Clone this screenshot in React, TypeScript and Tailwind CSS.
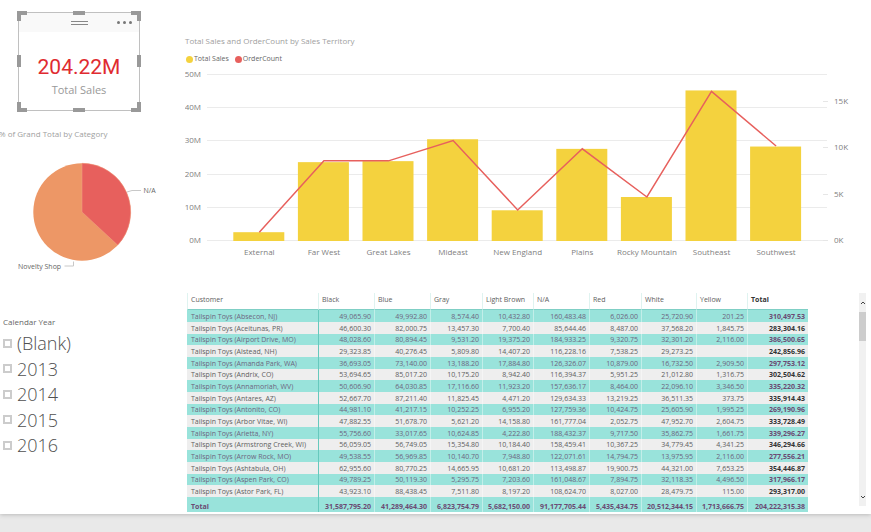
const columns = ["Customer", "Black", "Blue", "Gray", "Light Brown", "N/A", "Red", "White", "Yellow", "Total"];
const columnWidths = [
  "w-[131px]", "w-[56px]", "w-[56px]", "w-[52px]", "w-[51px]",
  "w-[56px]", "w-[52px]", "w-[55px]", "w-[51px]", "w-[61px]",
];

const rows: string[][] = [
  ["Tailspin Toys (Absecon, NJ)", "49,065.90", "49,992.80", "8,574.40", "10,432.80", "160,483.48", "6,026.00", "25,720.90", "201.25", "310,497.53"],
  ["Tailspin Toys (Aceitunas, PR)", "46,600.30", "82,000.75", "13,457.30", "7,700.40", "85,644.46", "8,487.00", "37,568.20", "1,845.75", "283,304.16"],
  ["Tailspin Toys (Airport Drive, MO)", "48,028.60", "80,894.45", "9,531.20", "19,375.20", "184,933.25", "9,320.75", "32,301.20", "2,116.00", "386,500.65"],
  ["Tailspin Toys (Alstead, NH)", "29,323.85", "40,276.45", "5,809.80", "14,407.20", "116,228.16", "7,538.25", "29,273.25", "", "242,856.96"],
  ["Tailspin Toys (Amanda Park, WA)", "36,693.05", "73,140.00", "13,188.20", "17,884.80", "126,326.07", "10,879.00", "16,732.50", "2,909.50", "297,753.12"],
  ["Tailspin Toys (Andrix, CO)", "53,694.65", "85,017.20", "10,175.20", "8,942.40", "116,394.37", "5,951.25", "21,012.80", "1,316.75", "302,504.62"],
  ["Tailspin Toys (Annamoriah, WV)", "50,606.90", "64,030.85", "17,116.60", "11,923.20", "157,636.17", "8,464.00", "22,096.10", "3,346.50", "335,220.32"],
  ["Tailspin Toys (Antares, AZ)", "52,667.70", "87,211.40", "11,825.45", "4,471.20", "129,634.33", "13,219.25", "36,511.35", "373.75", "335,914.43"],
  ["Tailspin Toys (Antonito, CO)", "44,981.10", "41,217.15", "10,252.25", "6,955.20", "127,759.36", "10,424.75", "25,605.90", "1,995.25", "269,190.96"],
  ["Tailspin Toys (Arbor Vitae, WI)", "47,882.55", "51,678.70", "5,621.20", "14,158.80", "161,777.04", "2,052.75", "47,952.70", "2,604.75", "333,728.49"],
  ["Tailspin Toys (Arietta, NY)", "55,756.60", "33,017.65", "10,624.85", "4,222.80", "188,432.37", "9,717.50", "35,862.75", "1,661.75", "339,296.27"],
  ["Tailspin Toys (Armstrong Creek, WI)", "56,059.05", "56,749.05", "15,354.80", "10,184.40", "158,459.41", "10,367.25", "34,779.45", "4,341.25", "346,294.66"],
  ["Tailspin Toys (Arrow Rock, MO)", "49,538.55", "56,969.85", "10,140.70", "7,948.80", "122,071.61", "14,794.75", "13,975.95", "2,116.00", "277,556.21"],
  ["Tailspin Toys (Ashtabula, OH)", "62,955.60", "80,770.25", "14,665.95", "10,681.20", "113,498.87", "19,900.75", "44,321.00", "7,653.25", "354,446.87"],
  ["Tailspin Toys (Aspen Park, CO)", "49,789.25", "50,119.30", "5,295.75", "7,203.60", "161,048.67", "7,894.75", "32,118.35", "4,496.50", "317,966.17"],
  ["Tailspin Toys (Astor Park, FL)", "43,923.10", "88,438.45", "7,511.80", "8,197.20", "108,624.70", "8,027.00", "28,479.75", "115.00", "293,317.00"],
];

const totals = ["Total", "31,587,795.20", "41,289,464.30", "6,823,754.79", "5,682,150.00", "91,177,705.44", "5,435,434.75", "20,512,344.15", "1,713,666.75", "204,222,315.38"];

const territories = [
  { name: "External", sales: 2.5, orders: 0.9 },
  { name: "Far West", sales: 23.6, orders: 8.6 },
  { name: "Great Lakes", sales: 23.9, orders: 8.6 },
  { name: "Mideast", sales: 30.5, orders: 10.8 },
  { name: "New England", sales: 9.1, orders: 3.3 },
  { name: "Plains", sales: 27.6, orders: 9.9 },
  { name: "Rocky Mountain", sales: 13.1, orders: 4.7 },
  { name: "Southeast", sales: 45.2, orders: 16.1 },
  { name: "Southwest", sales: 28.3, orders: 10.2 },
];

const BASE = 174.5;
const barX = (i: number) => 48.3 + i * 64.6;
const salesY = (m: number) => BASE - m * 3.32;
const ordersY = (k: number) => BASE - k * 9.26;

function KpiCard() {
  return (
    <section className="relative mt-3 ml-[18px] h-[99px] w-[122px] border border-[#c0c0c0]">
      <span className="absolute -top-[2px] -left-[2px] size-[10px] border-t-4 border-l-4 border-[#999]" />
      <span className="absolute -top-[2px] -right-[2px] size-[10px] border-t-4 border-r-4 border-[#999]" />
      <span className="absolute -bottom-[2px] -left-[2px] size-[10px] border-b-4 border-l-4 border-[#999]" />
      <span className="absolute -right-[2px] -bottom-[2px] size-[10px] border-r-4 border-b-4 border-[#999]" />
      <span className="absolute -top-[2px] left-[54px] h-1 w-3 bg-[#999]" />
      <span className="absolute -bottom-[2px] left-[54px] h-1 w-3 bg-[#999]" />
      <span className="absolute top-[42px] -left-[2px] h-3 w-1 bg-[#999]" />
      <span className="absolute top-[42px] -right-[2px] h-3 w-1 bg-[#999]" />
      <header className="grid h-[19px] grid-cols-[1fr_17px_1fr] items-center bg-[#f9f9f9]">
        <span />
        <span className="h-1 border-y border-[#888]" />
        <button type="button" aria-label="More options" className="flex justify-end gap-[3px] pr-[7px]">
          <span className="size-[3px] rounded-full bg-[#777]" />
          <span className="size-[3px] rounded-full bg-[#777]" />
          <span className="size-[3px] rounded-full bg-[#777]" />
        </button>
      </header>
      <p className="mt-[22px] text-center font-['Roboto',sans-serif] text-[21px] leading-[26px] text-[#e02b30]">204.22M</p>
      <p className="mt-[3px] text-center text-[11px] leading-[14px] text-[#999]">Total Sales</p>
    </section>
  );
}

function CategoryPie() {
  return (
    <section className="mt-[17px]">
      <h2 className="-ml-px text-[8px] leading-3 text-[#a0a0a0]">% of Grand Total by Category</h2>
      <svg viewBox="0 0 180 136" className="w-full" role="img" aria-label="Share of grand total by category">
        <circle cx="82" cy="72" r="48.7" fill="#ed9766" />
        <path d="M82 72V23.300A48.700 48.700 0 0 1 117.700 105.100Z" fill="#e7605d" stroke="#f0a08a" strokeWidth="0.500" />
        <path d="M127 52L132 50.500H141" fill="none" stroke="#c8c8c8" />
        <path d="M73.500 121.500V126H64.500" fill="none" stroke="#c8c8c8" />
        <text x="143.500" y="53" className="fill-[#666] text-[7px]">N/A</text>
        <text x="18" y="129" className="fill-[#666] text-[7px]">Novelty Shop</text>
      </svg>
    </section>
  );
}

function YearSlicer() {
  return (
    <fieldset className="mt-[40px] pl-[3px]">
      <legend className="text-[8px] leading-3 text-[#666]">Calendar Year</legend>
      <div className="mt-[2px] flex flex-col">
        {["(Blank)", "2013", "2014", "2015", "2016"].map((y) => (
          <label key={y} className="flex h-[26px] items-center gap-[5px] text-[18px] leading-6 font-light text-[#505050] even:h-[25px]">
            <input type="checkbox" className="size-[9px] appearance-none border-2 border-[#ccc] bg-white" />
            {y}
          </label>
        ))}
      </div>
    </fieldset>
  );
}

function SalesChart() {
  return (
    <section className="pt-[35px]">
      <h2 className="text-[8px] leading-3 text-[#a0a0a0]">Total Sales and OrderCount by Sales Territory</h2>
      <ul className="mt-[6px] flex gap-[6px] pl-px text-[7px] leading-3 text-[#666]">
        <li className="flex items-center gap-px">
          <span className="size-[7px] rounded-full bg-[#f4d23e]" />
          Total Sales
        </li>
        <li className="flex items-center gap-px">
          <span className="size-[7px] rounded-full bg-[#e7605d]" />
          OrderCount
        </li>
      </ul>
      <svg viewBox="0 0 686 200" className="mt-px w-full" role="img" aria-label="Sales and order count by territory">
        {[0, 10, 20, 30, 40, 50].map((m) => (
          <g key={m}>
            <path d={`M22 ${Math.floor(salesY(m)) + 0.5}H642`} stroke="#ebebeb" />
            <text x="16" y={salesY(m) + 2.5} textAnchor="end" className="fill-[#808080] text-[8px]">{m}M</text>
          </g>
        ))}
        {[0, 5, 10, 15].map((k) => (
          <g key={k}>
            <path d={`M638 ${Math.floor(ordersY(k)) + 0.5}H643`} stroke="#e6e6e6" />
            <text x="649" y={ordersY(k) + 2.5} className="fill-[#808080] text-[8px]">{k}K</text>
          </g>
        ))}
        {territories.map((t, i) => (
          <g key={t.name}>
            <rect x={barX(i)} y={salesY(t.sales)} width="51" height={BASE + 0.5 - salesY(t.sales)} fill="#f4d23e" />
            <text x={barX(i) + 26} y="189" textAnchor="middle" className="fill-[#808080] text-[8px]">{t.name}</text>
          </g>
        ))}
        <polyline
          points={territories.map((t, i) => `${barX(i) + 26},${ordersY(t.orders)}`).join(" ")}
          fill="none"
          stroke="#e7605d"
          strokeWidth="1.500"
        />
      </svg>
    </section>
  );
}

function CustomerTable() {
  return (
    <section className="mt-[27px] flex justify-between gap-[51px] pr-[5px] pl-[2px]">
      <table className="w-full table-fixed border-separate border-spacing-0 text-[7px] leading-[9px] text-[#606060]">
        <thead>
          <tr className="h-[17px]">
            {columns.map((c, i) => (
              <th
                key={c}
                scope="col"
                className={`${columnWidths[i]} border-b border-l border-b-[#7fcfc5] border-l-[#dff3f0] p-0 pb-[3px] pl-[3px] text-left whitespace-nowrap ${c === "Total" ? "font-bold text-[#333]" : "font-normal"}`}
              >
                {c}
              </th>
            ))}
          </tr>
        </thead>
        <tbody>
          {rows.map((r) => (
            <tr key={r[0]} className="group h-3 odd:bg-[#99e3db] even:bg-[#eee] nth-[3n]:h-[11px]">
              {r.map((v, i) =>
                i === 0 ? (
                  <th key={i} scope="row" className="p-0 pl-1 text-left font-normal whitespace-nowrap group-odd:text-[#6d6580]">{v}</th>
                ) : (
                  <td
                    key={i}
                    className={`border-l p-0 pr-[3px] text-right whitespace-nowrap ${i === 1 ? "border-l-[#66c9bd]" : "border-l-white/40"} ${i === 9 ? "font-bold text-[#333] group-odd:text-[#6b4a73]" : "group-odd:text-[#6d6580]"}`}
                  >
                    {v}
                  </td>
                ),
              )}
            </tr>
          ))}
        </tbody>
        <tfoot>
          <tr className="h-[15px] bg-[#99e3db] font-bold text-[#6b4a73]">
            {totals.map((v, i) =>
              i === 0 ? (
                <th key={i} scope="row" className="p-0 pt-[3px] pl-1 text-left">{v}</th>
              ) : (
                <td key={i} className={`border-l p-0 pt-[3px] pr-[3px] text-right whitespace-nowrap ${i === 1 ? "border-l-[#66c9bd]" : "border-l-white/40"}`}>{v}</td>
              ),
            )}
          </tr>
        </tfoot>
      </table>
      <div className="mb-[6px] flex w-[7px] shrink-0 flex-col bg-[#f1f1f1]">
        <button type="button" aria-label="Scroll up" className="flex h-[19px] items-center justify-center">
          <svg viewBox="0 0 6 6" className="size-[6px]"><path d="M1 4L3 2L5 4" fill="none" stroke="#444" /></svg>
        </button>
        <div className="h-[29px] bg-[#cdcdcd]" />
        <button type="button" aria-label="Scroll down" className="mt-auto flex h-[19px] items-center justify-center">
          <svg viewBox="0 0 6 6" className="size-[6px]"><path d="M1 2L3 4L5 2" fill="none" stroke="#444" /></svg>
        </button>
      </div>
    </section>
  );
}

export default function App() {
  return (
    <div className="min-h-screen overflow-hidden bg-[#e9e9e9] font-['Open_Sans','Noto_Sans',sans-serif]">
      <main className="flex bg-white pb-[2px] shadow-[0_1px_4px_#bbb]">
        <aside className="w-[180px] shrink-0">
          <KpiCard />
          <CategoryPie />
          <YearSlicer />
        </aside>
        <div className="min-w-0 flex-1 pl-[5px]">
          <SalesChart />
          <CustomerTable />
        </div>
      </main>
    </div>
  );
}
